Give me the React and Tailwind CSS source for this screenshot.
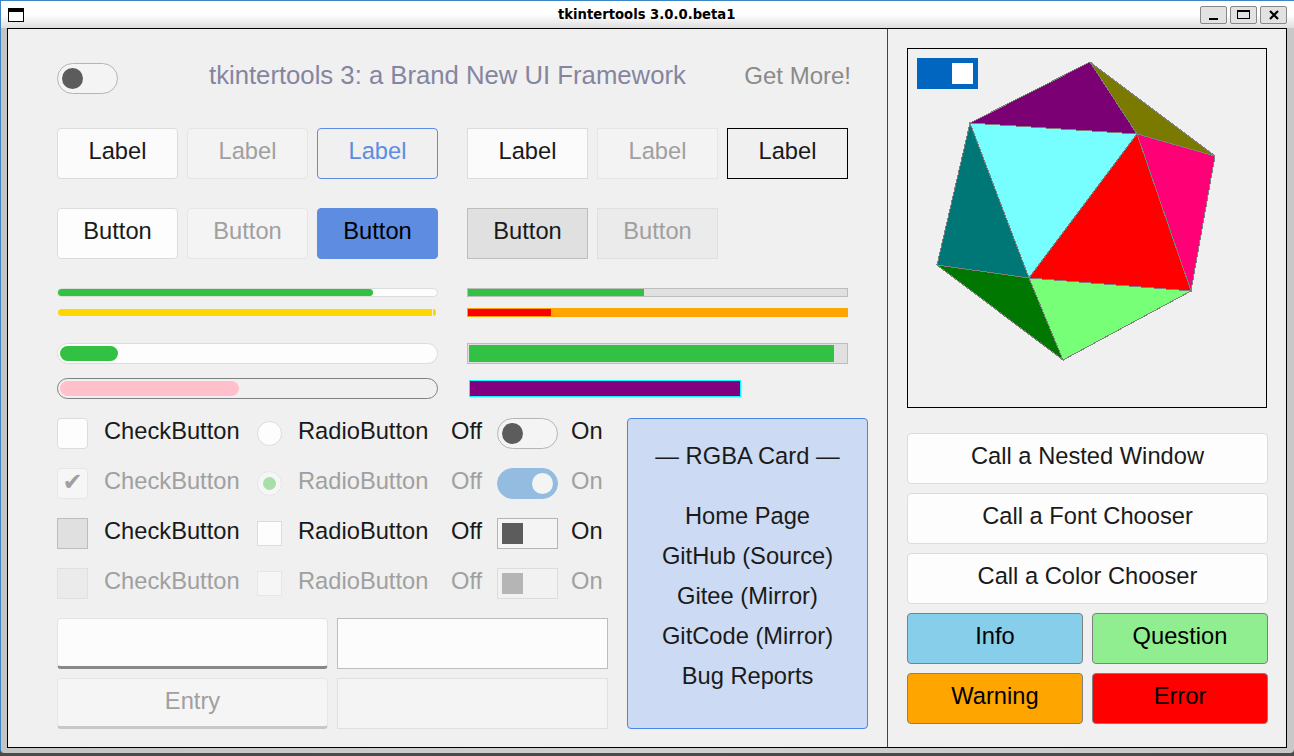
const faces = [
  { fill: "#7a0074", points: "1090,62 970,123 1137,134" },
  { fill: "#7a7a00", points: "1090,62 1137,134 1215,156" },
  { fill: "#77ffff", points: "970,123 1137,134 1029,278" },
  { fill: "#ff0077", points: "1137,134 1215,156 1191,291" },
  { fill: "#ff0000", points: "1137,134 1191,291 1029,278" },
  { fill: "#007777", points: "970,123 1029,278 937,265" },
  { fill: "#007700", points: "937,265 1029,278 1063,360" },
  { fill: "#77ff77", points: "1029,278 1191,291 1063,360" },
];

const boxBase =
  "h-[51px] flex items-center justify-center border pb-[4px] text-[23.7px] leading-none";

function Box({ className, children }) {
  return <div className={`w-[121px] ${boxBase} ${className}`}>{children}</div>;
}

function Toggle({ className, knob, end }) {
  return (
    <div
      className={`w-[61px] h-[31px] flex items-center px-[4px] border ${end ? "justify-end" : "justify-start"} ${className}`}
    >
      <div className={`w-[21px] h-[21px] ${knob}`} />
    </div>
  );
}

function ControlRow({ check, radio, toggle, muted, children }) {
  const color = muted ? "text-[#a0a0a0]" : "text-[#1a1a1a]";
  const text = `h-[31px] flex items-center pb-[4px] text-[23.7px] leading-none ${color}`;
  return (
    <div className="grid grid-cols-[47px_153px_41px_153px_46px_74px_33px] items-center h-[31px]">
      {check}
      <div className={text}>CheckButton</div>
      {radio}
      <div className={text}>RadioButton</div>
      <div className={text}>Off</div>
      {toggle}
      <div className={text}>On</div>
      {children}
    </div>
  );
}

function TitleBar() {
  return (
    <div className="relative h-[27px] flex items-center justify-between pl-[7px] pr-[7px] bg-gradient-to-b from-white via-white to-[#dedede]">
      <div className="w-[16px] h-[14px] border border-black border-t-[4px] bg-white" />
      <div className="absolute left-[557px] top-[6px] font-['DejaVu_Sans'] font-bold text-[13.2px] leading-[16px] text-black">
        tkintertools 3.0.0.beta1
      </div>
      <div className="flex gap-[3px]">
        <div className="w-[27px] h-[18px] flex items-center justify-center rounded-[2px] border border-[#888] bg-[#e2e2e2]">
          <div className="w-[9px] h-[2px] bg-black mt-[8px]" />
        </div>
        <div className="w-[27px] h-[18px] flex items-center justify-center rounded-[2px] border border-[#888] bg-[#e2e2e2]">
          <div className="w-[13px] h-[9px] border border-black border-t-[2px]" />
        </div>
        <div className="w-[27px] h-[18px] flex items-center justify-center rounded-[2px] border border-[#888] bg-[#e2e2e2]">
          <svg width="10" height="10" viewBox="0 0 10 10">
            <path d="M1 1 L9 9 M9 1 L1 9" stroke="#000" strokeWidth="2.2" fill="none" />
          </svg>
        </div>
      </div>
    </div>
  );
}

function LeftPanel() {
  return (
    <div className="w-[880px] shrink-0 border-r border-[#444] pl-[49px] pr-[18px] pt-[34px]">
      <div className="w-[794px] h-[31px] flex items-center justify-between">
        <Toggle className="rounded-full border-[#b5b5b5] bg-[#f4f4f4]" knob="rounded-full bg-[#5c5c5c]" />
        <div className="ml-[91px] pb-[6px] text-[25.7px] leading-none text-[#8585a0]">
          tkintertools 3: a Brand New UI Framework
        </div>
        <div className="ml-auto pb-[6px] text-[24px] leading-none text-[#8a8a8a]">Get More!</div>
      </div>

      <div className="mt-[34px] flex gap-[9px]">
        <Box className="rounded-[4px] border-[#dcdcdc] bg-[#fbfbfb] text-[#1a1a1a]">Label</Box>
        <Box className="rounded-[4px] border-[#e6e6e6] bg-[#f3f3f3] text-[#a0a0a0]">Label</Box>
        <Box className="rounded-[4px] border-[#5e8ce0] text-[#5e8ce0]">Label</Box>
        <Box className="ml-[20px] border-[#dcdcdc] bg-[#fbfbfb] text-[#1a1a1a]">Label</Box>
        <Box className="border-[#e6e6e6] bg-[#f3f3f3] text-[#a0a0a0]">Label</Box>
        <Box className="border-black text-[#1a1a1a]">Label</Box>
      </div>

      <div className="mt-[29px] flex gap-[9px]">
        <Box className="rounded-[4px] border-[#dcdcdc] bg-[#fdfdfd] text-[#1a1a1a]">Button</Box>
        <Box className="rounded-[4px] border-[#e6e6e6] bg-[#f4f4f4] text-[#a0a0a0]">Button</Box>
        <Box className="rounded-[4px] border-[#5e8ce0] bg-[#5e8ce0] text-black">Button</Box>
        <Box className="ml-[20px] border-[#bdbdbd] bg-[#e0e0e0] text-[#1a1a1a]">Button</Box>
        <Box className="border-[#e0e0e0] bg-[#ebebeb] text-[#a0a0a0]">Button</Box>
      </div>

      <div className="mt-[29px] grid grid-cols-[381px_381px] gap-x-[29px]">
        <div>
          <div className="h-[9px] rounded-full border border-[#dcdcdc] bg-[#fdfdfd]">
            <div className="w-[315px] h-full rounded-full bg-[#33c143]" />
          </div>
          <div className="mt-[11px] h-[9px] rounded-full border border-[#f0f0f0] flex gap-[1px]">
            <div className="w-[374px] h-full rounded-l-full bg-[#ffd700]" />
            <div className="w-[3px] h-full rounded-r-full bg-[#ffd700]" />
          </div>
        </div>
        <div>
          <div className="h-[9px] border border-[#bdbdbd] bg-[#e0e0e0]">
            <div className="w-[176px] h-full bg-[#33c143]" />
          </div>
          <div className="mt-[11px] h-[9px] border border-[#ffa500] bg-[#ffa500]">
            <div className="w-[83px] h-full bg-[#ff0000]" />
          </div>
        </div>
      </div>

      <div className="mt-[26px] grid grid-cols-[381px_381px] gap-x-[29px]">
        <div>
          <div className="h-[21px] rounded-full border border-[#dcdcdc] bg-[#fdfdfd] p-[2px]">
            <div className="w-[58px] h-full rounded-full bg-[#33c143]" />
          </div>
          <div className="mt-[14px] h-[21px] rounded-full border border-[#808080] p-[2px]">
            <div className="w-[179px] h-full rounded-full bg-[#ffc0cb]" />
          </div>
        </div>
        <div>
          <div className="h-[21px] border border-[#bdbdbd] bg-[#e0e0e0] p-[1px]">
            <div className="w-[365px] h-full bg-[#33c143]" />
          </div>
          <div className="mt-[14px] h-[21px] px-[2px] py-[2px]">
            <div className="w-[272px] h-full border border-[#00ffff] bg-[#800080]" />
          </div>
        </div>
      </div>

      <div className="mt-[19px] flex gap-[19px]">
        <div className="w-[551px]">
          <div className="flex flex-col gap-[19px]">
            <ControlRow
              check={<div className="w-[31px] h-[31px] rounded-[4px] border border-[#dcdcdc] bg-[#fdfdfd]" />}
              radio={<div className="w-[25px] h-[25px] rounded-full border border-[#dcdcdc] bg-[#fdfdfd]" />}
              toggle={<Toggle className="rounded-full border-[#b5b5b5] bg-[#f4f4f4]" knob="rounded-full bg-[#5c5c5c]" />}
            />
            <ControlRow
              muted
              check={
                <div className="w-[31px] h-[31px] flex items-center justify-center rounded-[4px] border border-[#e6e6e6] bg-[#f6f6f6] pb-[4px] font-['DejaVu_Sans'] text-[24px] leading-none text-[#a0a0a0]">
                  ✔
                </div>
              }
              radio={
                <div className="w-[25px] h-[25px] flex items-center justify-center rounded-full border border-[#e6e6e6] bg-[#f6f6f6]">
                  <div className="w-[13px] h-[13px] rounded-full bg-[#a8dfa8]" />
                </div>
              }
              toggle={<Toggle end className="rounded-full border-[#94bce0] bg-[#94bce0]" knob="rounded-full bg-[#f4f4f4]" />}
            />
            <ControlRow
              check={<div className="w-[31px] h-[31px] border border-[#bdbdbd] bg-[#e0e0e0]" />}
              radio={<div className="w-[25px] h-[25px] border border-[#dcdcdc] bg-[#fdfdfd]" />}
              toggle={<Toggle className="border-[#b5b5b5] bg-[#f4f4f4]" knob="bg-[#5c5c5c]" />}
            />
            <ControlRow
              muted
              check={<div className="w-[31px] h-[31px] border border-[#e0e0e0] bg-[#ebebeb]" />}
              radio={<div className="w-[25px] h-[25px] border border-[#e6e6e6] bg-[#f6f6f6]" />}
              toggle={<Toggle className="border-[#dcdcdc] bg-[#f2f2f2]" knob="bg-[#b5b5b5]" />}
            />
          </div>

          <div className="mt-[19px] grid grid-cols-[271px_271px] gap-[9px]">
            <div className="h-[51px] rounded-[4px] border border-[#e3e3e3] border-b-[3px] border-b-[#888] bg-[#fcfcfc]" />
            <div className="h-[51px] border border-[#bdbdbd] bg-[#fcfcfc]" />
            <div className="h-[51px] flex items-center justify-center rounded-[4px] border border-[#e6e6e6] border-b-[3px] border-b-[#c8c8c8] bg-[#f5f5f5] pb-[1px] text-[23.7px] leading-none text-[#a0a0a0]">
              Entry
            </div>
            <div className="h-[51px] border border-[#e0e0e0] bg-[#f4f4f4]" />
          </div>
        </div>

        <div className="w-[241px] h-[311px] flex flex-col items-center rounded-[4px] border border-[#4a86e8] bg-[#ccdbf3] pt-[22px] text-[23.7px] leading-[30px] text-[#1a1a1a]">
          <div>— RGBA Card —</div>
          <div className="mt-[30px] flex flex-col items-center gap-[10px]">
            <div>Home Page</div>
            <div>GitHub (Source)</div>
            <div>Gitee (Mirror)</div>
            <div>GitCode (Mirror)</div>
            <div>Bug Reports</div>
          </div>
        </div>
      </div>
    </div>
  );
}

function RightPanel() {
  const call = "rounded-[4px] border-[#dcdcdc] bg-[#fdfdfd] text-[#1a1a1a]";
  return (
    <div className="flex-1 pl-[19px] pt-[19px]">
      <div className="relative w-[360px] h-[360px] border border-black">
        <svg className="block w-[358px] h-[358px]" viewBox="908 49 358 358" shapeRendering="crispEdges">
          {faces.map((face) => (
            <polygon key={face.points} points={face.points} fill={face.fill} stroke="#808080" strokeWidth="1" />
          ))}
        </svg>
        <div className="absolute left-[9px] top-[9px] w-[61px] h-[31px] flex items-center justify-end pr-[5px] bg-[#0066bf]">
          <div className="w-[21px] h-[21px] bg-white" />
        </div>
      </div>

      <div className="mt-[25px] w-[361px] flex flex-col gap-[9px]">
        <div className={`${boxBase} ${call}`}>Call a Nested Window</div>
        <div className={`${boxBase} ${call}`}>Call a Font Chooser</div>
        <div className={`${boxBase} ${call}`}>Call a Color Chooser</div>
        <div className="grid grid-cols-[176px_176px] gap-[9px]">
          <div className={`${boxBase} rounded-[4px] border-[#808080] bg-[#87ceeb] text-black`}>Info</div>
          <div className={`${boxBase} rounded-[4px] border-[#808080] bg-[#90ee90] text-black`}>Question</div>
          <div className={`${boxBase} rounded-[4px] border-[#808080] bg-[#ffa500] text-black`}>Warning</div>
          <div className={`${boxBase} rounded-[4px] border-[#808080] bg-[#ff0000] text-black`}>Error</div>
        </div>
      </div>
    </div>
  );
}

export default function App() {
  return (
    <div className="w-[1294px] h-[756px] overflow-hidden flex flex-col bg-[#4a4a4a] font-['Liberation_Sans',sans-serif]">
      <div className="h-[1px] bg-[#3c86c4]" />
      <div className="h-[752px] rounded-b-[4px] border-l border-[#3c86c4] bg-gradient-to-r from-[#c4c4c4] via-[#d0d0d0] to-[#c8c8c8]">
        <TitleBar />
        <div className="ml-[6px] w-[1280px] h-[720px] flex border border-black bg-[#f0f0f0]">
          <LeftPanel />
          <RightPanel />
        </div>
      </div>
    </div>
  );
}
